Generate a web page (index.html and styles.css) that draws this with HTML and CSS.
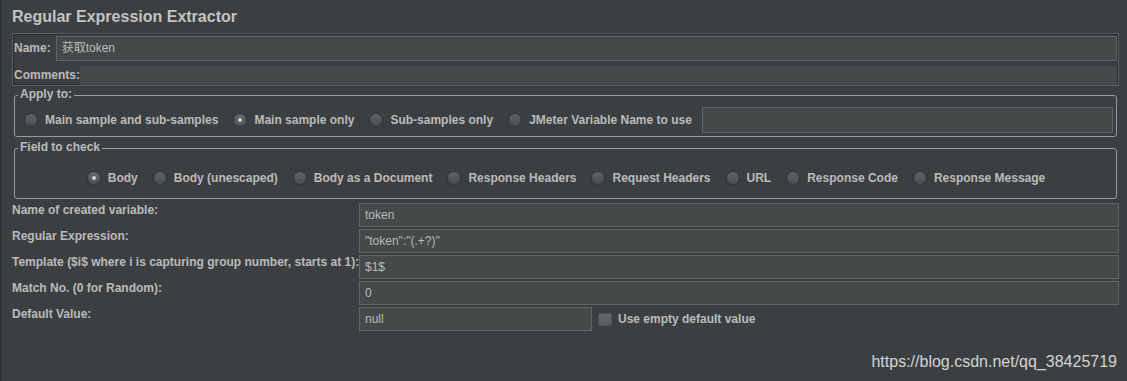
FILE: index.html
```html
<!DOCTYPE html>
<html lang="en">
<head>
<meta charset="utf-8">
<title>Regular Expression Extractor</title>
<link rel="stylesheet" href="styles.css">
</head>
<body>
<div class="page">
  <h1 class="title">Regular Expression Extractor</h1>

  <div class="name-panel">
    <div class="np-row name-row">
      <span class="np-label">Name:</span>
      <div class="np-field bordered">获取token</div>
    </div>
    <div class="np-row comments-row">
      <span class="np-label">Comments:</span>
      <div class="np-field plain"></div>
    </div>
  </div>

  <fieldset class="group apply">
    <legend>Apply to:</legend>
    <div class="radio-row apply-row">
      <label class="radio"><span class="dot"></span>Main sample and sub-samples</label>
      <label class="radio"><span class="dot on"></span>Main sample only</label>
      <label class="radio"><span class="dot"></span>Sub-samples only</label>
      <label class="radio"><span class="dot"></span>JMeter Variable Name to use</label>
      <div class="textfield var-field"></div>
    </div>
  </fieldset>

  <fieldset class="group fields">
    <legend>Field to check</legend>
    <div class="radio-row fields-row">
      <label class="radio"><span class="dot on"></span>Body</label>
      <label class="radio"><span class="dot"></span>Body (unescaped)</label>
      <label class="radio"><span class="dot"></span>Body as a Document</label>
      <label class="radio"><span class="dot"></span>Response Headers</label>
      <label class="radio"><span class="dot"></span>Request Headers</label>
      <label class="radio"><span class="dot"></span>URL</label>
      <label class="radio"><span class="dot"></span>Response Code</label>
      <label class="radio"><span class="dot"></span>Response Message</label>
    </div>
  </fieldset>

  <div class="form-grid">
    <span class="flabel">Name of created variable:</span>
    <div class="textfield">token</div>
    <span class="flabel">Regular Expression:</span>
    <div class="textfield">"token":"(.+?)"</div>
    <span class="flabel">Template ($i$ where i is capturing group number, starts at 1):</span>
    <div class="textfield">$1$</div>
    <span class="flabel">Match No. (0 for Random):</span>
    <div class="textfield">0</div>
    <span class="flabel">Default Value:</span>
    <div class="default-row">
      <div class="textfield default-field">null</div>
      <span class="checkbox"></span>
      <span class="check-label">Use empty default value</span>
    </div>
  </div>

  <div class="watermark">https://blog.csdn.net/qq_38425719</div>
</div>
</body>
</html>
```
FILE: styles.css
```css
html, body {
  margin: 0;
  padding: 0;
}

body {
  background: #3c3f41;
  font-family: "Liberation Sans", Arial, "Noto Sans CJK SC", sans-serif;
  font-size: 12px;
  font-weight: bold;
  color: #bbbbbb;
}

.page {
  position: relative;
  height: 381px;
  box-sizing: border-box;
  border-left: 2px solid #313335;
  padding: 0 8px 0 10px;
  overflow: hidden;
}

.title {
  margin: 0 0 6px 0;
  padding-top: 7px;
  font-size: 16px;
  line-height: 20px;
  font-weight: bold;
  color: #c3c3c3;
}

/* Name / Comments panel */
.name-panel {
  border: 1px solid #5b5e60;
  box-shadow: inset 0 0 0 1px #2b2d2f;
  padding: 2px 1px 0 1px;
  display: flex;
  flex-direction: column;
  gap: 5px;
}

.np-row {
  display: flex;
  align-items: center;
}

.np-label {
  line-height: 15px;
  flex: none;
}

.name-row .np-label {
  margin-right: 5px;
}

.np-field {
  flex: 1;
  box-sizing: border-box;
  background: #45494a;
  font-weight: normal;
  font-family: "Liberation Sans", Arial, "Noto Sans CJK SC", sans-serif;
}

.np-field.bordered {
  height: 25px;
  border: 1px solid #646464;
  padding: 0 5px;
  line-height: 23px;
}

.np-field.plain {
  height: 19px;
}

/* Titled groups */
.group {
  margin: 2px 2px 0;
  padding: 4px 2px 3px 3px;
  border: 1px solid #9a9a9a;
  border-radius: 3px;
  min-width: 0;
}

.group legend {
  padding: 0 2px 3px;
  line-height: 12px;
  color: #bbbbbb;
}

.fields {
  margin-top: 4px;
  padding-top: 12px;
  padding-bottom: 10px;
}

.radio-row {
  display: flex;
  align-items: center;
  gap: 15px;
}

.apply-row {
  padding-left: 6px;
  height: 26px;
}

.fields-row {
  justify-content: center;
  height: 20px;
}

.radio {
  display: flex;
  align-items: center;
  line-height: 15px;
  white-space: nowrap;
}

.dot {
  position: relative;
  flex: none;
  width: 14px;
  height: 14px;
  box-sizing: border-box;
  border-radius: 50%;
  border: 1px solid #303234;
  background: linear-gradient(#606365, #4b4e50);
  margin-right: 7px;
}

.dot.on {
  background: linear-gradient(#66696b, #515456);
}

.dot.on::after {
  content: "";
  position: absolute;
  left: 4px;
  top: 4px;
  width: 4px;
  height: 4px;
  border-radius: 50%;
  background: #d2d2d2;
}

.textfield {
  box-sizing: border-box;
  height: 24px;
  border: 1px solid #646464;
  background: #45494a;
  padding: 0 5px;
  line-height: 22px;
  font-weight: normal;
  color: #bbbbbb;
  white-space: nowrap;
}

.var-field {
  flex: 1;
  height: 26px;
  margin-left: -5px;
  margin-right: 1px;
}

/* Bottom form */
.form-grid {
  margin-top: 4px;
  display: grid;
  grid-template-columns: 347px 1fr;
  row-gap: 2px;
}

.flabel {
  line-height: 15px;
  white-space: nowrap;
  align-self: start;
}

.default-row {
  display: flex;
  align-items: center;
}

.default-field {
  width: 233px;
  flex: none;
  margin-right: 6px;
}

.checkbox {
  flex: none;
  width: 14px;
  height: 13px;
  box-sizing: border-box;
  border-radius: 2px;
  border: 1px solid #4e5153;
  background: linear-gradient(#65686a, #5a5d5f);
  margin-right: 6px;
}

.check-label {
  line-height: 15px;
}

.watermark {
  position: absolute;
  right: 10px;
  top: 353px;
  font-size: 16px;
  line-height: 18px;
  font-weight: normal;
  color: #d4d4d4;
}
```
